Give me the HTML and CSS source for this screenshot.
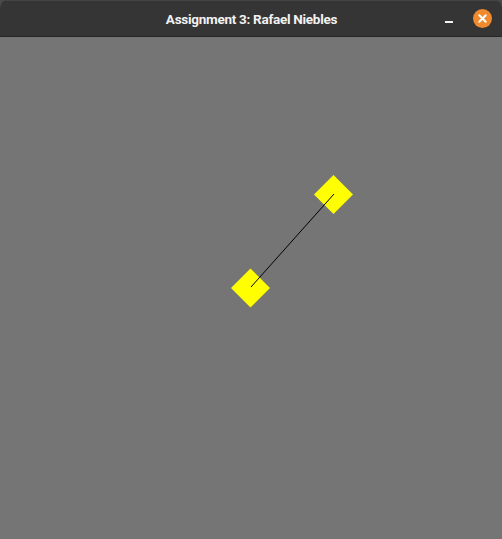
FILE: index.html
```html
<!DOCTYPE html>
<html>
<head>
<meta charset="utf-8">
<link rel="stylesheet" href="styles.css">
</head>
<body>
<div class="window">
  <header class="titlebar">
    <span class="title">Assignment 3: Rafael Niebles</span>
    <div class="controls">
      <span class="minimize"></span>
      <span class="close">
        <svg width="19" height="19" viewBox="0 0 19 19">
          <circle cx="9.5" cy="9.5" r="9.5" fill="#f08a2e"/>
          <path d="M6.3 6.3 L12.7 12.7 M12.7 6.3 L6.3 12.7" stroke="#fff" stroke-width="2" stroke-linecap="round"/>
        </svg>
      </span>
    </div>
  </header>
  <main class="canvas">
    <svg width="502" height="502" viewBox="0 37 502 502">
      <polygon points="333.5,175 353,194.5 333.5,214 314,194.5" fill="#ffff00"/>
      <polygon points="250.5,268.5 270,288 250.5,307.5 231,288" fill="#ffff00"/>
      <line x1="251" y1="287" x2="334" y2="194" stroke="#000" stroke-width="1"/>
    </svg>
  </main>
</div>
</body>
</html>
```

FILE: styles.css
```css
html, body {
  margin: 0;
  padding: 0;
  background: #4a4a4a;
}
.window {
  width: 502px;
  height: 539px;
  display: flex;
  flex-direction: column;
  border-radius: 7px 7px 0 0;
  overflow: hidden;
  background: #757575;
}
.titlebar {
  position: relative;
  height: 37px;
  flex: 0 0 37px;
  background: #353535;
  border-bottom: 1px solid #262626;
  border-top: 1px solid #444;
  box-sizing: border-box;
  display: flex;
  align-items: center;
  justify-content: center;
}
.title {
  font-family: Roboto, sans-serif;
  font-weight: bold;
  font-size: 13.5px;
  letter-spacing: -0.28px;
  color: #f2f2f2;
  margin-left: 1px;
}
.controls {
  position: absolute;
  right: 10px;
  top: 8px;
  display: flex;
  align-items: center;
  gap: 20px;
}
.minimize {
  display: block;
  width: 8px;
  height: 2px;
  background: #f2f2f2;
  margin-top: 6px;
}
.close {
  display: block;
  width: 19px;
  height: 19px;
}
.close svg { display: block; }
.canvas {
  flex: 1;
  background: #757575;
}
.canvas svg { display: block; }
```
